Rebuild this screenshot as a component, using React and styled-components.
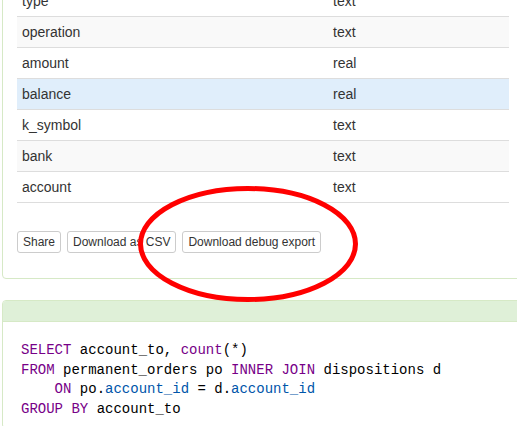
import React from "react";
import styled, { createGlobalStyle } from "styled-components";

const Global = createGlobalStyle`
  html, body { margin: 0; padding: 0; overflow: hidden; background: #fff; }
  body { font-family: "Liberation Sans", Arial, sans-serif; color: #333; }
`;

const Page = styled.div`
  position: relative;
  width: 522px;
  margin-top: -30px;
  padding-left: 2px;
`;

const Panel = styled.section`
  border: 1px solid #d6e9c6;
  border-radius: 4px;
  background: #fff;
  margin-bottom: ${(p) => p.$gap || 0}px;
`;

const PanelBody = styled.div`
  padding: ${(p) => p.$pad};
`;

const PanelHeading = styled.div`
  height: 20px;
  background: #dff0d8;
  border-bottom: 1px solid #d6e9c6;
  border-radius: 3px 3px 0 0;
`;

const Table = styled.table`
  width: 100%;
  border-collapse: collapse;
  border-spacing: 0;
  font-size: 14px;
  border-bottom: 1px solid #ddd;
`;

const Row = styled.tr`
  background: ${(p) => (p.$active ? "#e0eefb" : p.$striped ? "#f9f9f9" : "#fff")};
`;

const Cell = styled.td`
  border-top: 1px solid #ddd;
  padding: 5px;
  line-height: 20px;
  width: ${(p) => p.$w || "auto"};
`;

const Actions = styled.div`
  display: flex;
  gap: 6px;
  margin-top: 28px;
`;

const Button = styled.button`
  font-family: "Liberation Sans", Arial, sans-serif;
  font-size: 12px;
  line-height: 18px;
  padding: 1px 5px;
  color: #333;
  background: #fff;
  border: 1px solid #ccc;
  border-radius: 3px;
`;

const Code = styled.pre`
  margin: 0;
  padding: 4px 4px 7px;
  font-family: "Liberation Mono", "Courier New", monospace;
  font-size: 14px;
  line-height: 19.7px;
  color: #000;
  border-bottom: 1px solid #d6e9c6;
`;

const Kw = styled.span`
  color: #770088;
`;

const Prop = styled.span`
  color: #0055aa;
`;

const Annotation = styled.svg`
  position: absolute;
  left: 135px;
  top: 213px;
  pointer-events: none;
`;

const rows = [
  ["type", "text"],
  ["operation", "text"],
  ["amount", "real"],
  ["balance", "real"],
  ["k_symbol", "text"],
  ["bank", "text"],
  ["account", "text"],
];

export default function App() {
  return (
    <>
      <Global />
      <Page>
        <Panel $gap={21}>
          <PanelBody $pad="14px 14px 25px">
            <Table>
              <tbody>
                {rows.map(([name, type], i) => (
                  <Row key={name} $striped={i % 2 === 1} $active={name === "balance"}>
                    <Cell $w="301px">{name}</Cell>
                    <Cell>{type}</Cell>
                  </Row>
                ))}
              </tbody>
            </Table>
            <Actions>
              <Button>Share</Button>
              <Button>Download as CSV</Button>
              <Button>Download debug export</Button>
            </Actions>
          </PanelBody>
        </Panel>
        <Panel>
          <PanelHeading />
          <PanelBody $pad="15px 14px 0">
            <Code>
              <Kw>SELECT</Kw> account_to, <Kw>count</Kw>(*){"\n"}
              <Kw>FROM</Kw> permanent_orders po <Kw>INNER</Kw> <Kw>JOIN</Kw> dispositions d{"\n"}
              {"    "}<Kw>ON</Kw> po.<Prop>account_id</Prop> = d.<Prop>account_id</Prop>{"\n"}
              <Kw>GROUP</Kw> <Kw>BY</Kw> account_to
            </Code>
          </PanelBody>
        </Panel>
        <Annotation width="230" height="125" viewBox="0 0 230 125">
          <ellipse cx="113" cy="61" rx="107.5" ry="55.5" fill="none" stroke="#ff0000" strokeWidth="5" />
        </Annotation>
      </Page>
    </>
  );
}
